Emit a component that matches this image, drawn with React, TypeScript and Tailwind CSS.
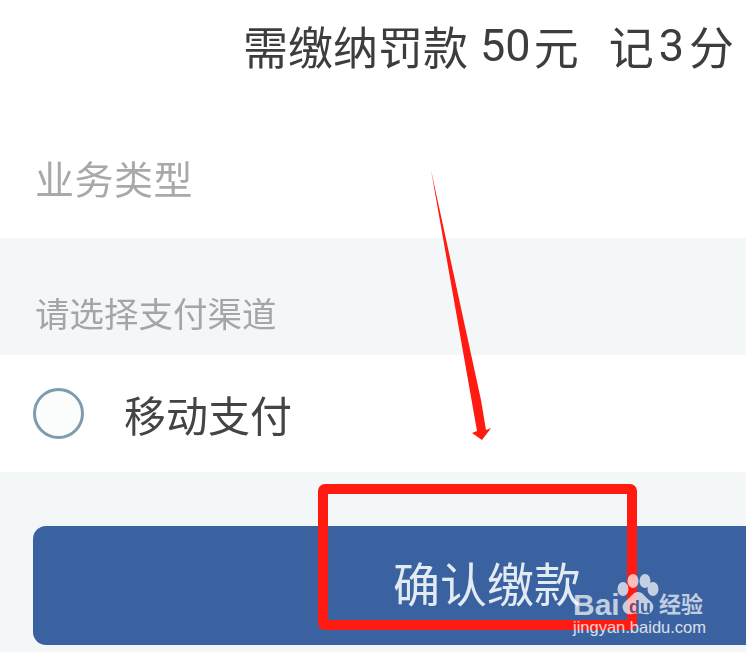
const cjk = "font-['Noto_Sans_CJK_SC','Liberation_Sans',sans-serif]";

function BaiduPaw() {
  return (
    <svg width="46" height="46" viewBox="0 0 46 46" className="shrink-0">
      <g fill="#ffffff">
        <ellipse cx="8" cy="17" rx="5.5" ry="7" />
        <ellipse cx="18" cy="9" rx="5.5" ry="7" />
        <ellipse cx="30" cy="9" rx="5.5" ry="7" />
        <ellipse cx="38" cy="17" rx="5.5" ry="7" />
        <path d="M23 20c-5 0-7 5-11 8-4 3-5 6-4 9 1 4 5 6 9 5 4-1 8-1 12 0 4 1 8-1 9-5 1-3 0-6-4-9-4-3-6-8-11-8z" />
      </g>
      <text x="25" y="41" textAnchor="middle" fontSize="18" fontWeight="700" fill="#3b62a0" fontFamily="Liberation Sans, sans-serif">du</text>
    </svg>
  );
}

export default function App() {
  return (
    <div className={`relative h-[652px] w-[746px] overflow-hidden bg-white ${cjk}`}>
      <div className="flex h-[238px] flex-col blur-[0.6px]">
        <div className="flex h-[91px] items-center justify-end pr-[12px] text-[45px] leading-none text-[#3d3d3d]">
          <span>需缴纳罚款</span>
          <span className="ml-[12px] font-['Roboto',sans-serif]">50</span>
          <span className="ml-[3px]">元</span>
          <span className="ml-[30px]">记</span>
          <span className="mx-[5px] font-['Roboto',sans-serif]">3</span>
          <span>分</span>
        </div>
        <div className="mt-[67px] pl-[35px] text-[39px] leading-none tracking-[0.5px] text-[#a9a9a9]">业务类型</div>
      </div>

      <div className="flex h-[117px] items-start bg-[#f4f7f8] pl-[35px] pt-[57px] text-[34.5px] leading-none text-[#a3a6a8] blur-[0.5px]">
        请选择支付渠道
      </div>

      <div className="flex h-[117px] items-center bg-white pl-[33px] blur-[0.5px]">
        <div className="h-[51px] w-[51px] rounded-full border-[3px] border-[#7f9bb0] bg-[#fbfdfd]" />
        <span className="ml-[40px] text-[42px] leading-none text-[#444444]">移动支付</span>
      </div>

      <div className="h-[180px] bg-[#f4f7f8] pl-[33px] pt-[54px]">
        <div className="flex h-[119px] w-[760px] items-center rounded-[13px] bg-[#3b62a0] pb-[8px] pl-[360px] text-[47px] leading-none text-[#e3ebf2] blur-[0.5px]">
          确认缴款
        </div>
      </div>

      {/* red annotation marks */}
      <div className="absolute left-[318px] top-[484px] h-[146px] w-[319px] rounded-[7px] border-[10px] border-[#ff1a12]" />
      <svg className="absolute left-0 top-0" width="746" height="652" viewBox="0 0 746 652">
        <polygon points="431,170 481,400 486,430 491,428 482,440 472,433 477,431" fill="#ff1a12" />
      </svg>

      {/* watermark */}
      <div className="absolute left-[615px] top-[572px] opacity-70">
        <BaiduPaw />
      </div>
      <div className="absolute left-[573px] top-[590px] font-['Liberation_Sans',sans-serif] text-[30px] font-bold leading-none text-white/70">Bai</div>
      <div className="absolute left-[659px] top-[591px] text-[22px] font-bold leading-none text-white/70">经验</div>
      <div className="absolute left-[573px] top-[619px] font-['Liberation_Sans',sans-serif] text-[16.5px] leading-none text-white/80">jingyan.baidu.com</div>
    </div>
  );
}
